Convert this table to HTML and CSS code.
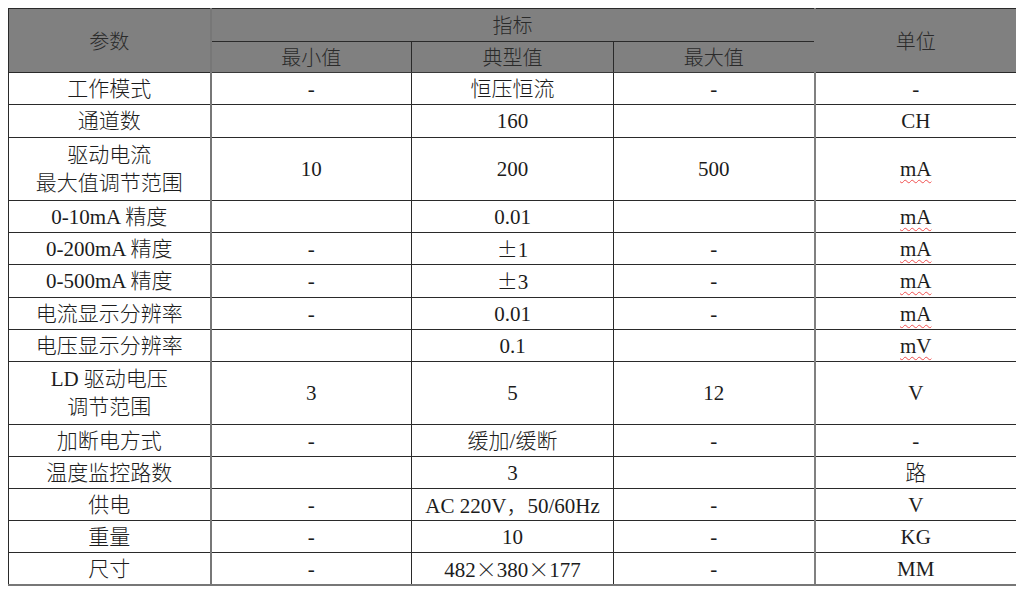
FILE: index.html
```html
<!DOCTYPE html>
<html lang="zh">
<head>
<meta charset="utf-8">
<title>参数表</title>
<link rel="stylesheet" href="styles.css">
</head>
<body>
<table class="spec">
  <colgroup>
    <col class="c1"><col class="c2"><col class="c3"><col class="c4"><col class="c5">
  </colgroup>
  <thead>
    <tr class="h1">
      <th rowspan="2" class="vsep">参数</th>
      <th colspan="3">指标</th>
      <th rowspan="2" class="usep">单位</th>
    </tr>
    <tr class="h2">
      <th class="sub">最小值</th>
      <th class="sub">典型值</th>
      <th class="sub">最大值</th>
    </tr>
  </thead>
  <tbody>
    <tr class="r"><td class="vsep">工作模式</td><td>-</td><td>恒压恒流</td><td>-</td><td class="usep">-</td></tr>
    <tr class="r r33"><td class="vsep">通道数</td><td></td><td>160</td><td></td><td class="usep">CH</td></tr>
    <tr class="rr"><td class="vsep">驱动电流<br>最大值调节范围</td><td>10</td><td>200</td><td>500</td><td class="usep"><span class="sp">mA</span></td></tr>
    <tr class="r"><td class="vsep">0-10mA 精度</td><td></td><td>0.01</td><td></td><td class="usep"><span class="sp">mA</span></td></tr>
    <tr class="r"><td class="vsep">0-200mA 精度</td><td>-</td><td><span class="cjk">±</span>1</td><td>-</td><td class="usep"><span class="sp">mA</span></td></tr>
    <tr class="r r33"><td class="vsep">0-500mA 精度</td><td>-</td><td><span class="cjk">±</span>3</td><td>-</td><td class="usep"><span class="sp">mA</span></td></tr>
    <tr class="r"><td class="vsep">电流显示分辨率</td><td>-</td><td>0.01</td><td>-</td><td class="usep"><span class="sp">mA</span></td></tr>
    <tr class="r"><td class="vsep">电压显示分辨率</td><td></td><td>0.1</td><td></td><td class="usep"><span class="sp">mV</span></td></tr>
    <tr class="rr"><td class="vsep">LD 驱动电压<br>调节范围</td><td>3</td><td>5</td><td>12</td><td class="usep">V</td></tr>
    <tr class="r"><td class="vsep">加断电方式</td><td>-</td><td>缓加/缓断</td><td>-</td><td class="usep">-</td></tr>
    <tr class="r"><td class="vsep">温度监控路数</td><td></td><td>3</td><td></td><td class="usep">路</td></tr>
    <tr class="r"><td class="vsep">供电</td><td>-</td><td>AC 220V<span class="cjk">，</span>50/60Hz</td><td>-</td><td class="usep">V</td></tr>
    <tr class="r"><td class="vsep">重量</td><td>-</td><td>10</td><td>-</td><td class="usep">KG</td></tr>
    <tr class="r last"><td class="vsep">尺寸</td><td>-</td><td>482<span class="cjk">×</span>380<span class="cjk">×</span>177</td><td>-</td><td class="usep">MM</td></tr>
  </tbody>
</table>
</body>
</html>
```
FILE: styles.css
```css
html, body {
  background: #ffffff;
}
body {
  margin: 8px;
  font-family: "Liberation Serif", "Noto Sans CJK SC", serif;
  font-size: 21px;
  font-weight: 300;
  color: #1c1c1c;
}
.spec {
  border-collapse: collapse;
  table-layout: fixed;
  width: 1008px;
  border: 1.5px solid #2a2a2a;
}
.c1 { width: 202px; }
.c2 { width: 201px; }
.c3 { width: 202px; }
.c4 { width: 201px; }
.c5 { width: 202px; }
.spec th,
.spec td {
  border: 1px solid #2a2a2a;
  padding: 0;
  text-align: center;
  vertical-align: middle;
  line-height: 28px;
  font-weight: 300;
}
.spec th {
  background: #808080;
  color: #2a2a2a;
  font-family: "Noto Sans CJK SC", sans-serif;
  font-size: 20px;
}
.h1 th { height: 32px; }
.h2 th { height: 30px; }
.spec th.sub { border-bottom: 1.5px solid #3a3a3a; }
.r td { height: 31px; }
.r33 td { height: 32px; }
.rr td { height: 62px; }
.spec .vsep { border-right: 2px solid #777777; }
.spec .usep { border-left: 2px solid #808080; }
.last td { border-bottom: 2px solid #777777; }
.cjk {
  font-family: "Noto Sans CJK SC", sans-serif;
}
.sp {
  text-decoration: underline wavy #f05050;
  text-decoration-thickness: 1px;
  text-underline-offset: 3px;
}
```
